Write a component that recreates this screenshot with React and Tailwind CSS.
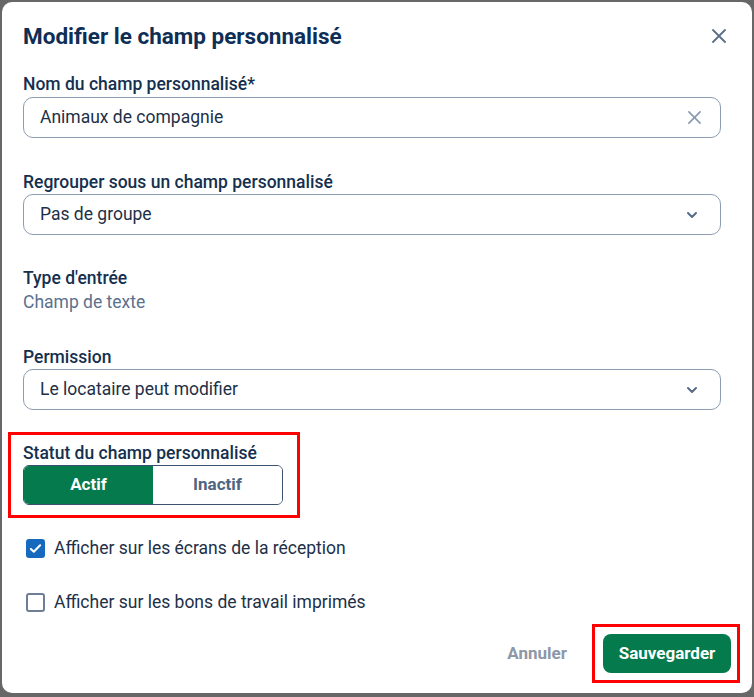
import { useState } from 'react'

function CloseIcon({ className }) {
  return (
    <svg viewBox="0 0 14 14" className={className} fill="none" stroke="currentColor" strokeWidth="1.8" strokeLinecap="round">
      <path d="M1 1l12 12M13 1L1 13" />
    </svg>
  )
}

function Chevron() {
  return (
    <svg viewBox="0 0 12 8" className="h-[8px] w-[12px] text-[#566b85]" fill="none" stroke="currentColor" strokeWidth="2" strokeLinecap="round" strokeLinejoin="round">
      <path d="M2 2l4 4 4-4" />
    </svg>
  )
}

function Label({ children }) {
  return <div className="text-[17.5px] font-medium leading-6 text-[#15304f]">{children}</div>
}

function SelectBox({ value }) {
  return (
    <div className="flex h-[41px] items-center justify-between rounded-[10px] border border-[#8d9db1] pl-4 pr-[22px] text-[17.5px] text-[#1d3048]">
      <span>{value}</span>
      <Chevron />
    </div>
  )
}

function Check({ checked, label }) {
  return (
    <label className="flex h-6 items-center gap-[9px] pl-[3px]">
      {checked ? (
        <span className="flex h-[19px] w-[19px] items-center justify-center rounded-[3px] bg-[#1769bd]">
          <svg viewBox="0 0 14 14" className="h-[13px] w-[13px]" fill="none" stroke="white" strokeWidth="2.2" strokeLinecap="round" strokeLinejoin="round">
            <path d="M2 7.5l3.2 3L12 3.5" />
          </svg>
        </span>
      ) : (
        <span className="h-[19px] w-[19px] rounded-[3px] border-2 border-[#6d7f96] bg-white" />
      )}
      <span className="text-[17.5px] text-[#1d3048]">{label}</span>
    </label>
  )
}

export default function App() {
  const [active, setActive] = useState(true)

  return (
    <div className="flex h-[697px] w-[754px] bg-[#676767] px-[2px] pb-[4px] pt-[2px] font-['Roboto',sans-serif]">
      <div className="flex w-[750px] flex-col rounded-[10px] bg-white">
        <div className="pl-[21px] pr-[31px] pt-5">
          <div className="flex items-center justify-between">
            <h2 className="text-[22.5px] font-bold leading-7 text-[#0f2e55]">Modifier le champ personnalisé</h2>
            <CloseIcon className="mr-[-5px] h-[14px] w-[14px] text-[#5b6f88]" />
          </div>

          <div className="mt-[22px]">
            <Label>Nom du champ personnalisé*</Label>
            <div className="mt-[1px] flex h-[41px] items-center justify-between rounded-[10px] border border-[#8d9db1] pl-4 pr-[19px] text-[17.5px] text-[#1d3048]">
              <span>Animaux de compagnie</span>
              <CloseIcon className="h-[13px] w-[13px] text-[#8a9ab0]" />
            </div>
          </div>

          <div className="mt-[32px]">
            <Label>Regrouper sous un champ personnalisé</Label>
            <SelectBox value="Pas de groupe" />
          </div>

          <div className="mt-[31px]">
            <Label>Type d'entrée</Label>
            <div className="text-[17.5px] leading-6 text-[#5a718e]">Champ de texte</div>
          </div>

          <div className="mt-[31px]">
            <Label>Permission</Label>
            <SelectBox value="Le locataire peut modifier" />
          </div>

          <div className="-ml-[15px] mt-[22px] w-[292px] border-[3px] border-[#ff0000] pb-[10px] pl-[12px] pr-[14px] pt-[6px]">
            <Label>Statut du champ personnalisé</Label>
            <div className="flex h-[40px] overflow-hidden rounded-[6px] border border-[#3a526e]">
              <button type="button" onClick={() => setActive(true)} className={'flex-1 text-[17px] font-bold ' + (active ? 'bg-[#047a4d] text-white' : 'bg-white text-[#4f6581]')}>
                Actif
              </button>
              <button type="button" onClick={() => setActive(false)} className={'flex-1 text-[17px] font-bold ' + (!active ? 'bg-[#047a4d] text-white' : 'bg-white text-[#4f6581]')}>
                Inactif
              </button>
            </div>
          </div>

          <div className="mt-[18px]">
            <Check checked label="Afficher sur les écrans de la réception" />
          </div>
          <div className="mt-[30px]">
            <Check label="Afficher sur les bons de travail imprimés" />
          </div>
        </div>

        <div className="mt-[10px] flex items-center justify-end gap-[25px] pr-[12px]">
          <span className="text-[17px] font-bold text-[#8c97a7]">Annuler</span>
          <div className="border-[3px] border-[#ff0000] pb-[7px] pl-[8px] pr-[6px] pt-[7px]">
            <button type="button" className="h-[39px] w-[128px] rounded-[8px] bg-[#047a4d] text-[17px] font-bold text-white">
              Sauvegarder
            </button>
          </div>
        </div>
      </div>
    </div>
  )
}
